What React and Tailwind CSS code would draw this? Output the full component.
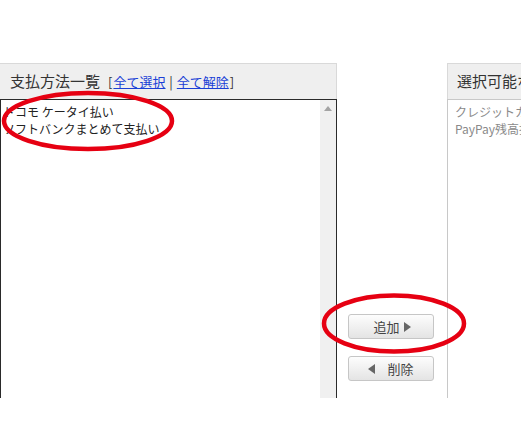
import React from 'react';

const jp = { fontFamily: '"Noto Sans CJK JP", "Noto Sans", sans-serif' };

const leftItems = ['ドコモ ケータイ払い', 'ソフトバンクまとめて支払い'];
const rightItems = ['クレジットカード払い', 'PayPay残高払い'];

const Tri = ({ dir }) => (
  <svg width="7" height="10" viewBox="0 0 7 10" className="shrink-0">
    {dir === 'right' ? (
      <polygon points="0,0 7,5 0,10" fill="#666" />
    ) : (
      <polygon points="7,0 0,5 7,10" fill="#666" />
    )}
  </svg>
);

const App = () => {
  return (
    <div className="relative w-[521px] h-[428px] bg-white overflow-hidden" style={jp}>
      {/* page is cropped at the bottom edge (y=398) */}
      <div className="pt-[63px] h-[398px] flex items-start overflow-hidden">
        {/* 支払方法一覧 */}
        <div className="w-[337px] shrink-0 flex flex-col">
          <div className="h-[36px] shrink-0 bg-[#efefef] border-t border-r border-[#d9d9d9] flex items-center pl-[10px] text-[#333]">
            <span className="text-[15px]">支払方法一覧</span>
            <span className="text-[13px] ml-[8px]">
              [<a className="text-[#1a3fd6] underline px-[1px]">全て選択</a> | <a className="text-[#1a3fd6] underline px-[1px]">全て解除</a>]
            </span>
          </div>
          <div className="h-[330px] flex border border-[#2a2a2a] bg-white">
            <div className="flex-1 pt-[3px] pl-[2px] text-[12px] leading-[17px] text-[#222]">
              {leftItems.map((t) => (
                <div key={t}>{t}</div>
              ))}
            </div>
            <div className="w-[16px] bg-[#f0f0f0] flex justify-center pt-[6px]">
              <svg width="8" height="5" viewBox="0 0 8 5">
                <polygon points="0,5 4,0 8,5" fill="#a3a3a3" />
              </svg>
            </div>
          </div>
        </div>

        {/* 追加 / 削除 */}
        <div className="w-[110px] h-full shrink-0 flex flex-col justify-end pl-[11px] pb-[17px] gap-[17px]">
          <button className="w-[86px] h-[25px] rounded-[3px] border border-[#c6c6c6] bg-gradient-to-b from-[#fdfdfd] to-[#e4e4e4] flex items-center justify-center gap-[4px] text-[13px] text-[#444] pl-[2px]">
            <span>追加</span>
            <Tri dir="right" />
          </button>
          <button className="w-[86px] h-[25px] rounded-[3px] border border-[#c6c6c6] bg-gradient-to-b from-[#fdfdfd] to-[#e4e4e4] flex items-center justify-center gap-[12px] text-[13px] text-[#444]">
            <Tri dir="left" />
            <span>削除</span>
          </button>
        </div>

        {/* 選択可能な支払方法 */}
        <div className="flex-1 flex flex-col min-w-0 overflow-hidden">
          <div className="h-[36px] shrink-0 bg-[#efefef] border-t border-l border-[#d9d9d9] flex items-center pl-[9px] text-[15px] text-[#333] whitespace-nowrap">
            選択可能な支払方法
          </div>
          <div className="h-[330px] border-l border-t border-[#c8c8c8] bg-white pt-[3px] pl-[7px] text-[12px] leading-[17px] text-[#8a8a8a] whitespace-nowrap">
            {rightItems.map((t) => (
              <div key={t}>{t}</div>
            ))}
          </div>
        </div>
      </div>

      {/* 赤丸 */}
      <svg className="absolute inset-0 pointer-events-none" width="521" height="428">
        <ellipse cx="88" cy="121" rx="84" ry="28" fill="none" stroke="#e60012" strokeWidth="4.5" />
        <ellipse cx="394" cy="323.5" rx="70" ry="28" fill="none" stroke="#e60012" strokeWidth="4.5" />
      </svg>
    </div>
  );
};

export default App;
